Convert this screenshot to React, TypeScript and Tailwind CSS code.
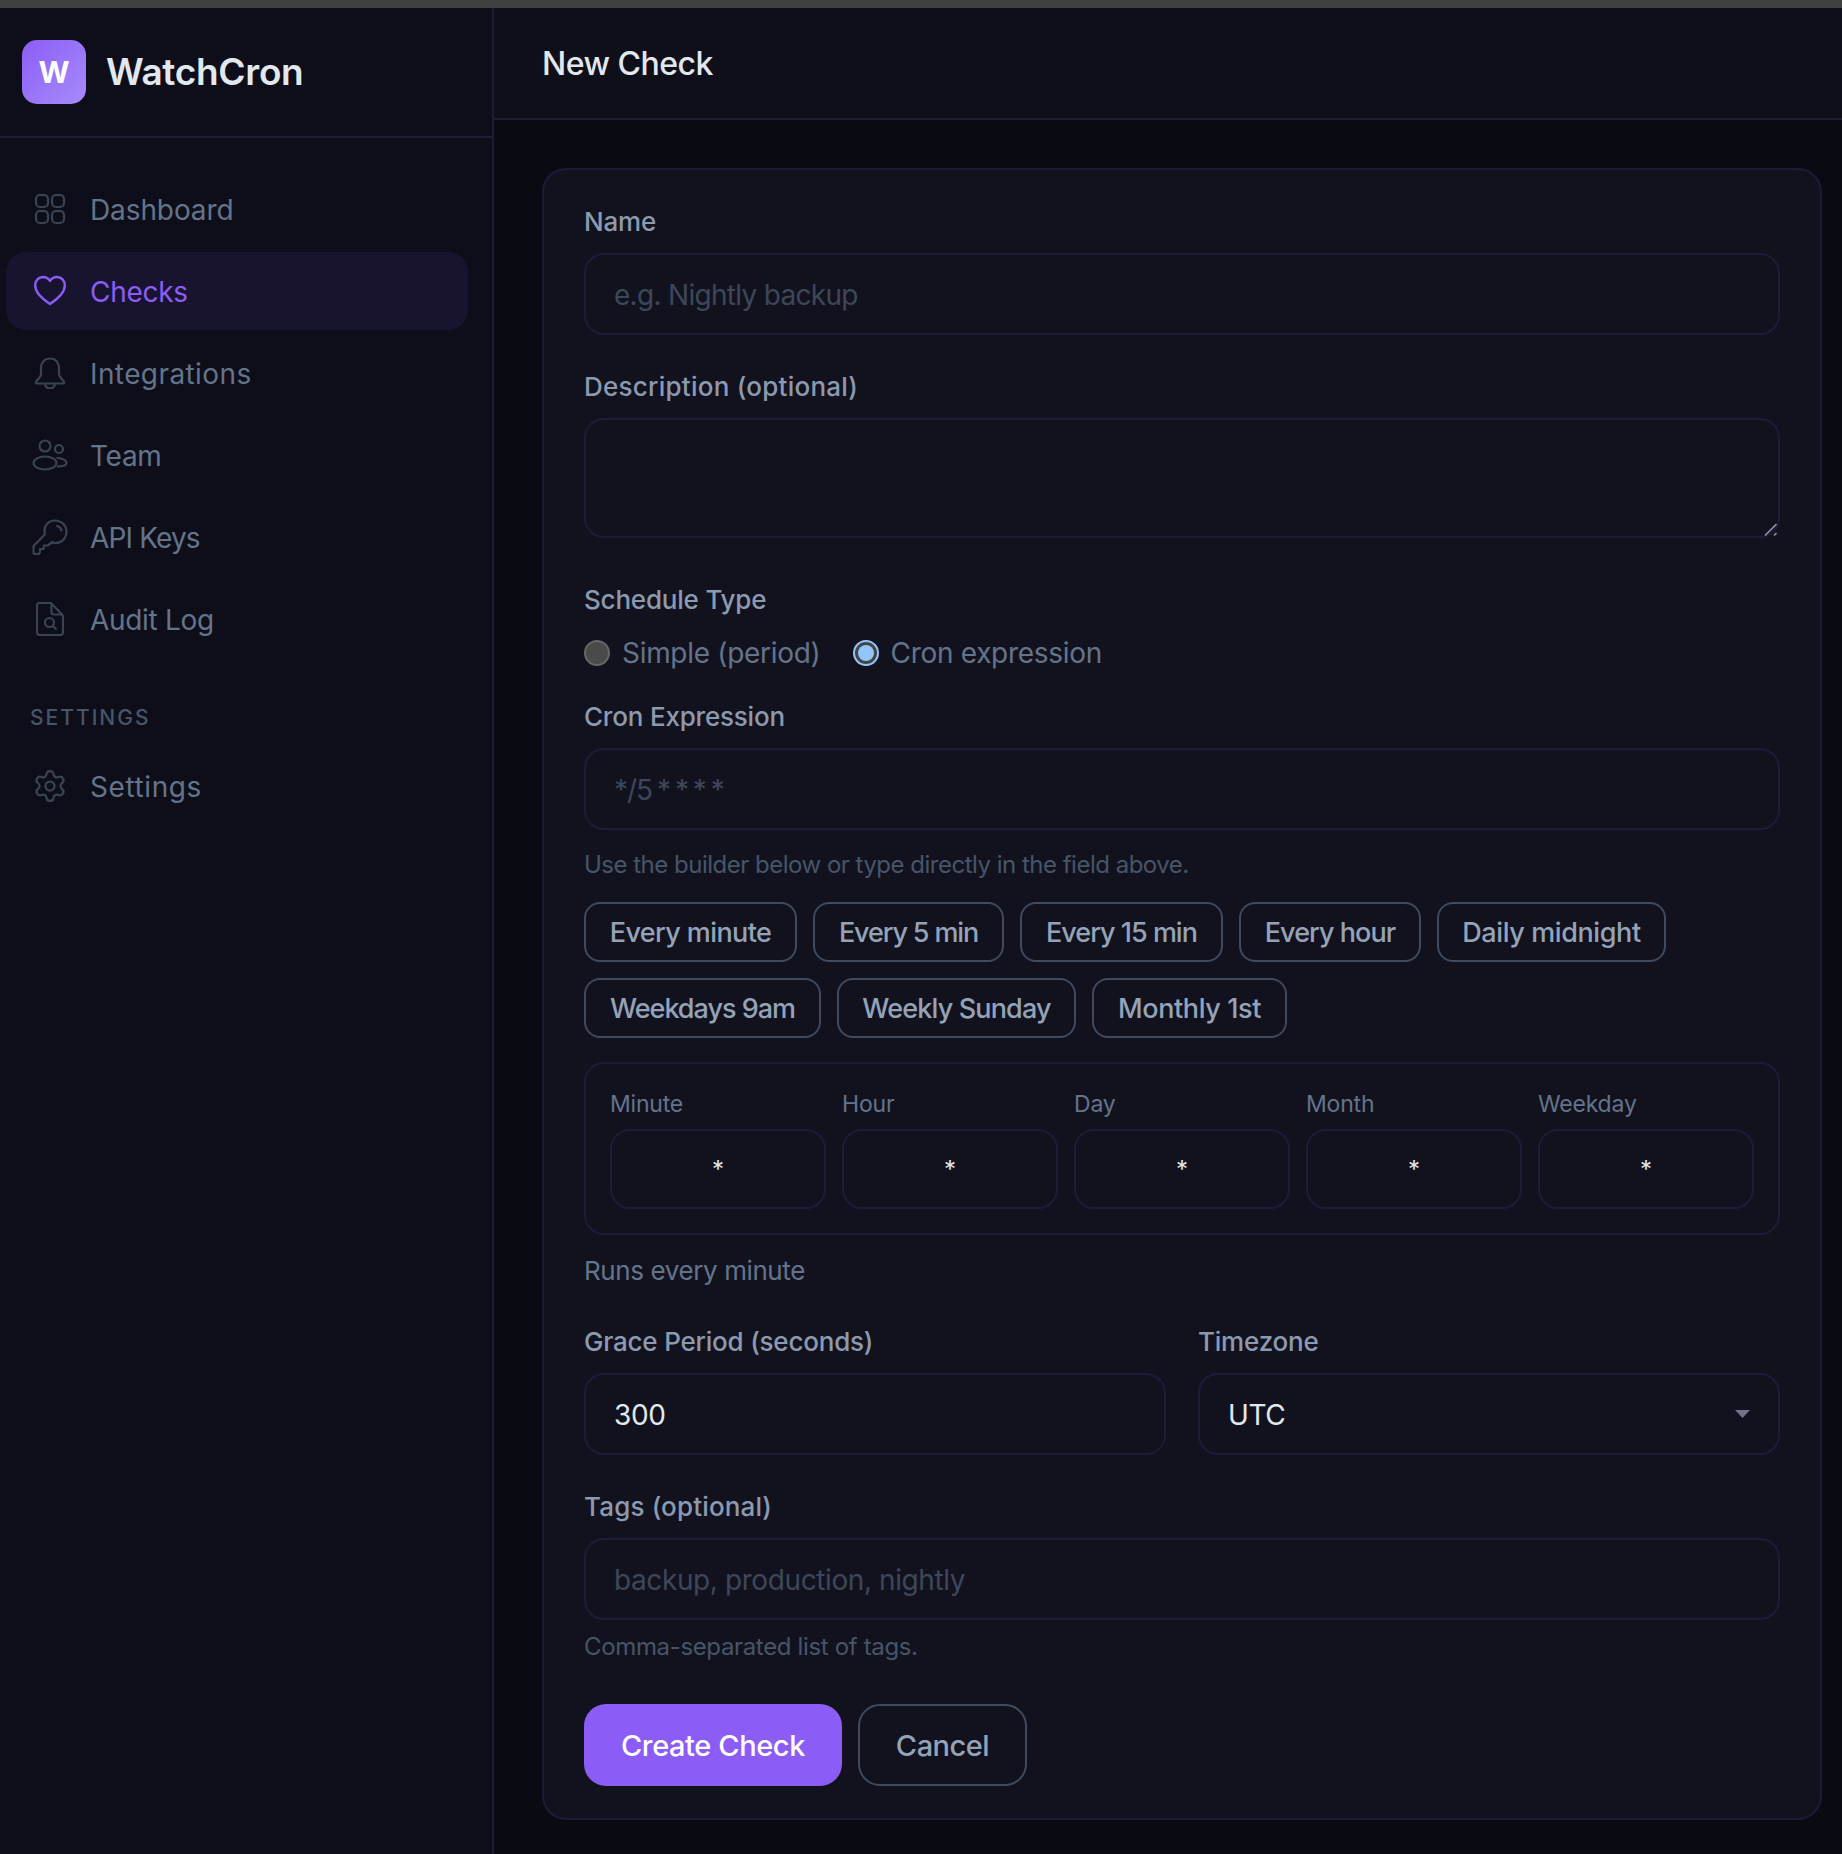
import { ReactNode } from 'react';
import { Settings } from 'lucide-react';

const stroke = 'fill-none stroke-current';

function DashIcon() {
    return (
        <svg viewBox="0 0 32 32" className={`h-8 w-8 ${stroke}`} strokeWidth="2.2">
            <rect x="2" y="2" width="12" height="12" rx="4" />
            <rect x="18" y="2" width="12" height="12" rx="4" />
            <rect x="2" y="18" width="12" height="12" rx="4" />
            <rect x="18" y="18" width="12" height="12" rx="4" />
        </svg>
    );
}

function HeartIcon() {
    return (
        <svg viewBox="0 0 32 32" className={`h-8 w-8 ${stroke}`} strokeWidth="2.4">
            <path d="M16 29C10 25 1.200 18 1.200 10.500C1.200 5.500 4.500 2 9 2C12 2 14.500 3.500 16 6C17.500 3.500 20 2 23 2C27.500 2 30.800 5.500 30.800 10.500C30.800 18 22 25 16 29Z" strokeLinejoin="round" />
        </svg>
    );
}

function BellIcon() {
    return (
        <svg viewBox="0 0 32 32" className={`h-8 w-8 ${stroke}`} strokeWidth="2.2">
            <path d="M16 1.500C10.500 1.500 7 5.500 7 11V17C7 20 3 23 2 25C1.500 26 2 26.500 3 26.500H29C30 26.500 30.500 26 30 25C29 23 25 20 25 17V11C25 5.500 21.500 1.500 16 1.500Z" strokeLinejoin="round" />
            <path d="M11 27C11.500 30 13.500 31.500 16 31.500C18.500 31.500 20.500 30 21 27" />
        </svg>
    );
}

function TeamIcon() {
    return (
        <svg viewBox="0 0 36 32" className={`h-8 w-9 ${stroke}`} strokeWidth="2.2">
            <circle cx="13" cy="7" r="5.500" />
            <circle cx="27" cy="10" r="4" />
            <ellipse cx="13" cy="24" rx="11.500" ry="6.500" />
            <path d="M24.500 19C29 19 34.500 20.500 34.500 24C34.500 27 30 27.500 25 27.500" />
        </svg>
    );
}

function KeyIcon() {
    return (
        <svg viewBox="0 0 36 36" className={`h-9 w-9 ${stroke}`} strokeWidth="2.2">
            <path d="M23 1.500C16.500 1.500 12 6.500 12.500 13L12.800 15.500L1.500 27V33.500C1.500 34.500 2 35 3 35H7L8 33V30H11.500L12 26.500H15.500L20.500 23C21.500 23.500 22.500 24 23.500 24C30 24 34.500 19 34.500 12.500C34.500 6.500 29.500 1.500 23 1.500Z" strokeLinejoin="round" />
            <path d="M25 7C27.500 7.500 29 9 29.500 11.500" strokeLinecap="round" />
        </svg>
    );
}

function AuditIcon() {
    return (
        <svg viewBox="0 0 28 34" className={`h-[34px] w-7 ${stroke}`} strokeWidth="2.2">
            <path d="M3.500 1H14C15 1 15.500 1.300 16 2L26 12.500C26.700 13.200 27 14 27 15V30.500C27 32 26 33 24.500 33H3.500C2 33 1 32 1 30.500V3.500C1 2 2 1 3.500 1Z" strokeLinejoin="round" />
            <path d="M15.500 2V10C15.500 11.500 16.500 12.500 18 12.500H26.500" />
            <circle cx="13.500" cy="20.500" r="4.500" />
            <path d="M17 24L20 27" strokeLinecap="round" />
        </svg>
    );
}

const navItems: { label: string; icon: ReactNode; active?: boolean; spacing?: string }[] = [
    { label: 'Dashboard', icon: <DashIcon />, spacing: 'tracking-[-0.1px]' },
    { label: 'Checks', icon: <HeartIcon />, active: true },
    { label: 'Integrations', icon: <BellIcon />, spacing: 'tracking-[0.4px]' },
    { label: 'Team', icon: <TeamIcon /> },
    { label: 'API Keys', icon: <KeyIcon />, spacing: 'tracking-[-0.85px]' },
    { label: 'Audit Log', icon: <AuditIcon /> },
];

const chips: { label: string; className: string }[] = [
    { label: 'Every minute', className: 'w-[213px] tracking-[-0.6px]' },
    { label: 'Every 5 min', className: 'w-[191px] tracking-[-1.15px]' },
    { label: 'Every 15 min', className: 'w-[203px] tracking-[-1px]' },
    { label: 'Every hour', className: 'w-[182px] tracking-[-0.95px]' },
    { label: 'Daily midnight', className: 'w-[229px] tracking-[-0.4px]' },
    { label: 'Weekdays 9am', className: 'w-[237px] tracking-[-1px]' },
    { label: 'Weekly Sunday', className: 'w-[239px] tracking-[-0.85px]' },
    { label: 'Monthly 1st', className: 'w-[195px] tracking-[-0.4px]' },
];

function NavRow({ label, icon, active, spacing }: { label: string; icon: ReactNode; active?: boolean; spacing?: string }) {
    return (
        <div
            className={`mb-1 ml-1.5 flex h-[78px] w-[462px] items-center rounded-[20px] ${
                active ? 'bg-[#181430] text-[#8b5cf6]' : 'text-[#64748b]'
            }`}
        >
            <div className={`flex w-[84px] justify-center pl-[4px] ${active ? '' : 'text-[#3a4354]'}`}>{icon}</div>
            <span className={`mt-[2px] text-[28px] ${spacing ?? 'tracking-[-0.3px]'}`}>{label}</span>
        </div>
    );
}

function Label({ children, spacing }: { children: ReactNode; spacing?: string }) {
    return <div className={`h-[35px] text-[26px] leading-[35px] font-medium text-[#8c9ab0] ${spacing ?? 'tracking-[-0.2px]'}`}>{children}</div>;
}

function Field({ placeholder, value, className }: { placeholder?: string; value?: string; className?: string }) {
    return (
        <input
            readOnly
            placeholder={placeholder}
            defaultValue={value}
            className={`block h-[82px] w-full rounded-[20px] border-2 border-[#1e1b3a] bg-transparent pt-[2px] pl-[28px] text-[28px] text-[#e2e8f0] outline-none placeholder:text-[#3d4759] ${className ?? 'tracking-[-0.4px]'}`}
        />
    );
}

function CronCol({ label }: { label: string }) {
    return (
        <div className="flex-1">
            <div className="h-[33px] text-[23px] leading-[33px] tracking-[-0.2px] text-[#64748b]">{label}</div>
            <div className="mt-[8px] flex h-[80px] justify-center rounded-[20px] border-2 border-[#1e1b3a] pt-[21px] text-[24px] text-[#e2e8f0]">*</div>
        </div>
    );
}

export default function App() {
    return (
        <div className="flex h-[1854px] flex-col bg-[#0a0a12] font-['Inter',sans-serif]">
            <div className="h-2 bg-[#404040]" />
            <div className="flex flex-1">
                <aside className="w-[494px] shrink-0 border-r-2 border-[#1e1b3a] bg-[#0d0e19]">
                    <div className="flex h-[130px] items-center border-b-2 border-[#1e1b3a] pl-[22px]">
                        <div className="flex h-16 w-16 items-center justify-center rounded-[15px] bg-gradient-to-br from-[#8b5cf6] to-[#a78bfa] text-[30px] font-bold text-white">
                            W
                        </div>
                        <span className="ml-5 text-[37px] font-semibold tracking-[-0.3px] text-[#e2e8f0]">WatchCron</span>
                    </div>
                    <nav className="pt-[32px]">
                        {navItems.map((item) => (
                            <NavRow key={item.label} {...item} />
                        ))}
                        <div className="mt-[44px] mb-[13px] pl-[30px] text-[21px] font-medium tracking-[2px] text-[#475569]">SETTINGS</div>
                        <NavRow label="Settings" icon={<Settings size={36} strokeWidth={1.5} />} spacing="tracking-[0.6px]" />
                    </nav>
                </aside>
                <main className="min-w-0 flex-1">
                    <header className="flex h-[112px] items-center border-b-2 border-[#1e1b3a] bg-[#0f0f1a] pt-[2px] pl-[48px] text-[32px] font-medium tracking-[-0.5px] text-[#e2e8f0]">
                        New Check
                    </header>
                    <div className="pt-[48px] pr-[20px] pl-[48px]">
                        <section className="h-[1652px] rounded-[24px] border-2 border-[#1e1b3a] bg-[#12121f] px-[40px] pt-[34px]">
                            <Label>Name</Label>
                            <div className="mt-[14px]"><Field placeholder="e.g. Nightly backup" className="tracking-[-0.7px]" /></div>

                            <div className="mt-[34px]"><Label spacing="tracking-[0.25px]">Description (optional)</Label></div>
                            <div className="relative mt-[14px]">
                                <textarea readOnly className="block h-[120px] w-full resize-none rounded-[20px] border-2 border-[#1e1b3a] bg-transparent outline-none" />
                                <svg viewBox="0 0 13 13" className="absolute right-[3px] bottom-[2px] h-[13px] w-[13px] stroke-[#8b95a0]" strokeWidth="1.6">
                                    <path d="M1 12.500L12.500 1M10 12.500L12.500 10" />
                                </svg>
                            </div>

                            <div className="mt-[44px]"><Label>Schedule Type</Label></div>
                            <div className="mt-[18px] flex h-[36px] items-center text-[28px] tracking-[-0.3px] text-[#64748b]">
                                <span className="h-[26px] w-[26px] rounded-full border-2 border-[#666] bg-[#4a4a4a]" />
                                <span className="ml-3">Simple (period)</span>
                                <span className="ml-8 flex h-[26px] w-[26px] items-center justify-center rounded-full border-2 border-[#93c5fd] bg-[#444]">
                                    <span className="h-[16px] w-[16px] rounded-full bg-[#93c5fd]" />
                                </span>
                                <span className="ml-3">Cron expression</span>
                            </div>

                            <div className="mt-[28px]"><Label>Cron Expression</Label></div>
                            <div className="mt-[14px]"><Field placeholder="*/5 * * * *" className="tracking-[-1px] [word-spacing:-2px]" /></div>
                            <div className="mt-[18px] h-[34px] text-[24px] leading-[34px] tracking-[-0.5px] text-[#475569]">
                                Use the builder below or type directly in the field above.
                            </div>
                            <div className="mt-[20px] flex flex-wrap gap-4">
                                {chips.map((c) => (
                                    <div
                                        key={c.label}
                                        className={`flex h-[60px] items-center justify-center rounded-[16px] border-2 border-[#3f4a5e] pt-[2px] text-[27px] font-medium text-[#94a3b8] ${c.className}`}
                                    >
                                        {c.label}
                                    </div>
                                ))}
                            </div>
                            <div className="mt-[24px] flex h-[173px] gap-4 rounded-[20px] border-2 border-[#1e1b3a] px-[24px] pt-[24px]">
                                {['Minute', 'Hour', 'Day', 'Month', 'Weekday'].map((c) => (
                                    <CronCol key={c} label={c} />
                                ))}
                            </div>
                            <div className="mt-[17px] h-[38px] text-[26px] leading-[38px] tracking-[-0.4px] text-[#64748b]">Runs every minute</div>

                            <div className="mt-[34px] flex gap-8">
                                <div className="flex-1">
                                    <Label>Grace Period (seconds)</Label>
                                    <div className="mt-[14px]"><Field value="300" /></div>
                                </div>
                                <div className="flex-1">
                                    <Label>Timezone</Label>
                                    <div className="relative mt-[14px]">
                                        <Field value="UTC" />
                                        <svg viewBox="0 0 15 8" className="absolute top-[37px] right-[30px] h-2 w-[15px] fill-[#71718a]">
                                            <path d="M0 0H15L7.500 8Z" />
                                        </svg>
                                    </div>
                                </div>
                            </div>

                            <div className="mt-[34px]"><Label spacing="tracking-[0.15px]">Tags (optional)</Label></div>
                            <div className="mt-[14px]"><Field placeholder="backup, production, nightly" /></div>
                            <div className="mt-[10px] h-[34px] text-[24px] leading-[34px] tracking-[-0.35px] text-[#475569]">Comma-separated list of tags.</div>

                            <div className="mt-[40px] flex gap-4">
                                <div className="flex h-[82px] w-[258px] items-center justify-center rounded-[22px] bg-[#8b5cf6] pt-[2px] text-[29px] font-medium tracking-[-0.4px] text-white">
                                    Create Check
                                </div>
                                <div className="flex h-[82px] w-[169px] items-center justify-center rounded-[22px] border-2 border-[#3f4a5e] pt-[2px] text-[29px] font-medium tracking-[-0.5px] text-[#94a3b8]">
                                    Cancel
                                </div>
                            </div>
                        </section>
                    </div>
                </main>
            </div>
        </div>
    );
}
